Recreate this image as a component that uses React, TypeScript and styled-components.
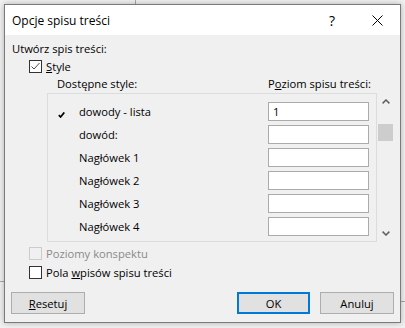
import React from "react";
import styled, { createGlobalStyle } from "styled-components";

const GlobalStyle = createGlobalStyle`
  html, body {
    margin: 0;
    padding: 0;
  }
  body {
    background: #f1f1f1;
    font-family: "Open Sans", "Noto Sans", sans-serif;
    font-size: 11.2px;
    color: #000;
  }
`;

const Screen = styled.div`
  position: relative;
  width: 405px;
  height: 328px;
  box-sizing: border-box;
  padding: 4px 0 0 4px;
  overflow: hidden;
  background: #f1f1f1;
`;

// bits of the document window peeking out behind the dialog
const Rule = styled.div<{ $top: number; $left: number; $w: number; $h: number }>`
  position: absolute;
  top: ${(p) => p.$top}px;
  left: ${(p) => p.$left}px;
  width: ${(p) => p.$w}px;
  height: ${(p) => p.$h}px;
  background: #a8a8a8;
`;

const Dialog = styled.div`
  position: relative;
  width: 397px;
  height: 319px;
  box-sizing: border-box;
  border: 1px solid #7a7a7a;
  background: #f0f0f0;
  box-shadow: 0 0 6px rgba(0, 0, 0, 0.28);
  display: flex;
  flex-direction: column;
`;

const TitleBar = styled.div`
  height: 30px;
  flex: none;
  background: #fff;
  display: flex;
  align-items: center;
  font-size: 12px;
`;

const Title = styled.div`
  flex: 1;
  padding-left: 7px;
`;

const TitleButton = styled.div<{ $w: number }>`
  width: ${(p) => p.$w}px;
  height: 30px;
  display: flex;
  align-items: center;
  justify-content: center;
  font-size: 14px;
`;

const Body = styled.div`
  flex: 1;
  display: flex;
  flex-direction: column;
  padding: 0 6px;
`;

const SectionLabel = styled.div`
  margin-top: 6px;
  height: 16px;
  line-height: 16px;
  padding-left: 1px;
`;

const CheckRow = styled.div<{ $mt: number; $disabled?: boolean }>`
  margin-top: ${(p) => p.$mt}px;
  height: 13px;
  padding-left: 18px;
  display: flex;
  align-items: center;
  gap: 4px;
  color: ${(p) => (p.$disabled ? "#8a8a8a" : "#000")};
  line-height: 13px;
`;

const Box = styled.div<{ $disabled?: boolean }>`
  width: 13px;
  height: 13px;
  box-sizing: border-box;
  border: 1px solid ${(p) => (p.$disabled ? "#cccccc" : "#333333")};
  background: ${(p) => (p.$disabled ? "#f0f0f0" : "#ffffff")};
  display: flex;
  align-items: center;
  justify-content: center;
`;

const Headers = styled.div`
  margin-top: 3px;
  height: 16px;
  line-height: 16px;
  display: grid;
  grid-template-columns: 211px 1fr;
  padding-left: 46px;
`;

const ListArea = styled.div`
  margin-top: 1px;
  margin-left: 36px;
  height: 149px;
  display: flex;
`;

const ListBox = styled.div`
  width: 330px;
  box-sizing: border-box;
  border: 1px solid #dcdcdc;
  padding: 8px 0 0 10px;
  overflow: hidden;
  display: flex;
  flex-direction: column;
  gap: 4px;
`;

const StyleRow = styled.div`
  height: 19px;
  flex: none;
  display: grid;
  grid-template-columns: 21px 189px 101px;
  align-items: center;
`;

const Tick = styled.div`
  align-self: start;
  padding-top: 4px;
  height: 7px;
`;

const LevelInput = styled.div`
  height: 19px;
  box-sizing: border-box;
  border: 1px solid #ababab;
  background: #fff;
  padding-left: 4px;
  line-height: 17px;
`;

const ScrollBar = styled.div`
  width: 17px;
  display: flex;
  flex-direction: column;
`;

const ScrollArrow = styled.div`
  height: 17px;
  display: flex;
  align-items: center;
  justify-content: center;
`;

const Track = styled.div`
  flex: 1;
  padding: 14px 1px 0;
`;

const Thumb = styled.div`
  height: 17px;
  background: #cdcdcd;
`;

const ButtonRow = styled.div`
  margin-top: 13px;
  display: flex;
  gap: 10px;
`;

const Spacer = styled.div`
  flex: 1;
`;

const Button = styled.div<{ $primary?: boolean }>`
  width: ${(p) => (p.$primary ? 73 : 74)}px;
  height: 22px;
  box-sizing: border-box;
  border: ${(p) => (p.$primary ? "2px solid #0078d7" : "1px solid #adadad")};
  background: #e1e1e1;
  display: flex;
  align-items: center;
  justify-content: center;
`;

const styles = [
  { name: "dowody - lista", level: "1", used: true },
  { name: "dowód:", level: "" },
  { name: "Nagłówek 1", level: "" },
  { name: "Nagłówek 2", level: "" },
  { name: "Nagłówek 3", level: "" },
  { name: "Nagłówek 4", level: "" },
];

function Chevron({ up }: { up?: boolean }) {
  return (
    <svg width="8" height="5" viewBox="0 0 8 5">
      <polyline
        points={up ? "0.6,4.4 4,1 7.4,4.4" : "0.6,0.6 4,4 7.4,0.6"}
        fill="none"
        stroke="#606060"
        strokeWidth="1.5"
      />
    </svg>
  );
}

export default function App() {
  return (
    <Screen>
      <GlobalStyle />
      <Rule $top={0} $left={135} $w={1} $h={4} />
      <Rule $top={281} $left={0} $w={4} $h={1} />
      <Rule $top={301} $left={401} $w={4} $h={1} />
      <Dialog>
        <TitleBar>
          <Title>Opcje spisu treści</Title>
          <TitleButton $w={46}>?</TitleButton>
          <TitleButton $w={45}>
            <svg width="11" height="11" viewBox="0 0 11 11">
              <path d="M0.5 0.5 L10.5 10.5 M10.5 0.5 L0.5 10.5" stroke="#000" strokeWidth="1" />
            </svg>
          </TitleButton>
        </TitleBar>
        <Body>
          <SectionLabel>Utwórz spis treści:</SectionLabel>
          <CheckRow $mt={3}>
            <Box>
              <svg width="11" height="11" viewBox="0 0 11 11">
                <polyline points="1.5,5.5 4,8 9.5,2" fill="none" stroke="#4a4a4a" strokeWidth="1" />
              </svg>
            </Box>
            <span>
              <u>S</u>tyle
            </span>
          </CheckRow>
          <Headers>
            <span>Dostępne style:</span>
            <span>
              P<u>o</u>ziom spisu treści:
            </span>
          </Headers>
          <ListArea>
            <ListBox>
              {styles.map((s) => (
                <StyleRow key={s.name}>
                  <Tick>
                    {s.used && (
                      <svg width="7" height="6" viewBox="0 0 7 6">
                        <polyline points="0.8,3.2 2.6,5 6.3,0.4" fill="none" stroke="#000" strokeWidth="1.7" />
                      </svg>
                    )}
                  </Tick>
                  <span>{s.name}</span>
                  <LevelInput>{s.level}</LevelInput>
                </StyleRow>
              ))}
            </ListBox>
            <ScrollBar>
              <ScrollArrow>
                <Chevron up />
              </ScrollArrow>
              <Track>
                <Thumb />
              </Track>
              <ScrollArrow>
                <Chevron />
              </ScrollArrow>
            </ScrollBar>
          </ListArea>
          <CheckRow $mt={5} $disabled>
            <Box $disabled />
            <span>Poziomy konspektu</span>
          </CheckRow>
          <CheckRow $mt={6}>
            <Box />
            <span>
              Pola <u>w</u>pisów spisu treści
            </span>
          </CheckRow>
          <ButtonRow>
            <Button>
              <span>
                <u>R</u>esetuj
              </span>
            </Button>
            <Spacer />
            <Button $primary>OK</Button>
            <Button>Anuluj</Button>
          </ButtonRow>
        </Body>
      </Dialog>
    </Screen>
  );
}
